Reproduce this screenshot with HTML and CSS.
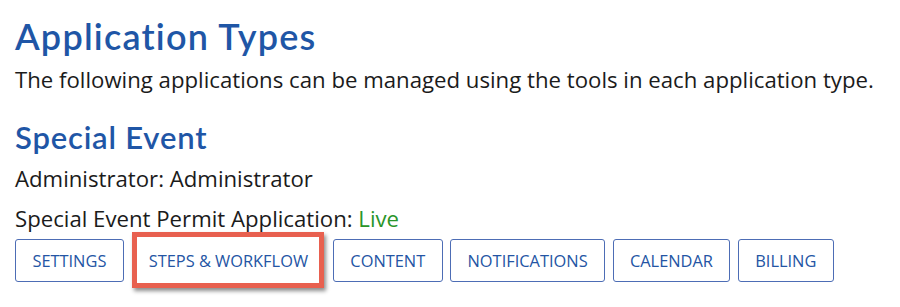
FILE: index.html
```
<!DOCTYPE html>
<html>
<head>
<meta charset="utf-8">
<link rel="stylesheet" href="styles.css">
</head>
<body>
<main class="page">
  <h1 class="title">Application Types</h1>
  <p class="intro">The following applications can be managed using the tools in each application type.</p>
  <h2 class="type-name">Special Event</h2>
  <p class="meta">Administrator: Administrator</p>
  <p class="meta meta-app">Special Event Permit Application: <span class="live">Live</span></p>
  <div class="tools">
    <a class="btn">SETTINGS</a>
    <a class="btn btn-hl">STEPS &amp; WORKFLOW<span class="hl"></span></a>
    <a class="btn">CONTENT</a>
    <a class="btn">NOTIFICATIONS</a>
    <a class="btn">CALENDAR</a>
    <a class="btn">BILLING</a>
  </div>
</main>
</body>
</html>
```
FILE: styles.css
```
html, body {
  margin: 0;
  padding: 0;
  background: #ffffff;
}
body {
  min-height: 307px;
}
.page {
  padding: 14px 15px 0 15px;
  font-family: "Open Sans", "Liberation Sans", sans-serif;
  color: #1b1b1b;
}
.title {
  margin: 0;
  font-family: Lato, "Open Sans", sans-serif;
  font-weight: 600;
  font-size: 36px;
  line-height: 44px;
  letter-spacing: 1.2px;
  font-variant-ligatures: none;
  color: #1f56a6;
}
.intro {
  margin: 7px 0 0 0;
  font-size: 22.2px;
  line-height: 30px;
}
.type-name {
  margin: 23px 0 0 0;
  font-family: Lato, "Open Sans", sans-serif;
  font-weight: 600;
  font-size: 31px;
  line-height: 38px;
  letter-spacing: 0.8px;
  font-variant-ligatures: none;
  color: #1f56a6;
}
.meta {
  margin: 8px 0 0 0;
  font-size: 22.2px;
  line-height: 30px;
}
.meta-app {
  margin-top: 10px;
}
.live {
  color: #2a952a;
}
.tools {
  display: flex;
  gap: 7.5px;
  margin-top: 5px;
}
.btn {
  position: relative;
  display: flex;
  align-items: center;
  height: 41px;
  padding: 0 16.4px;
  border: 1px solid #4d6db5;
  border-radius: 3px;
  font-size: 16.4px;
  color: #2455a4;
}
.btn-hl {
  border-color: transparent;
}
.hl {
  position: absolute;
  left: 0;
  right: 0;
  top: -8px;
  bottom: -7px;
  border: 5px solid #e8604f;
  box-shadow: 2px 3px 4px rgba(0,0,0,0.45);
}
```
